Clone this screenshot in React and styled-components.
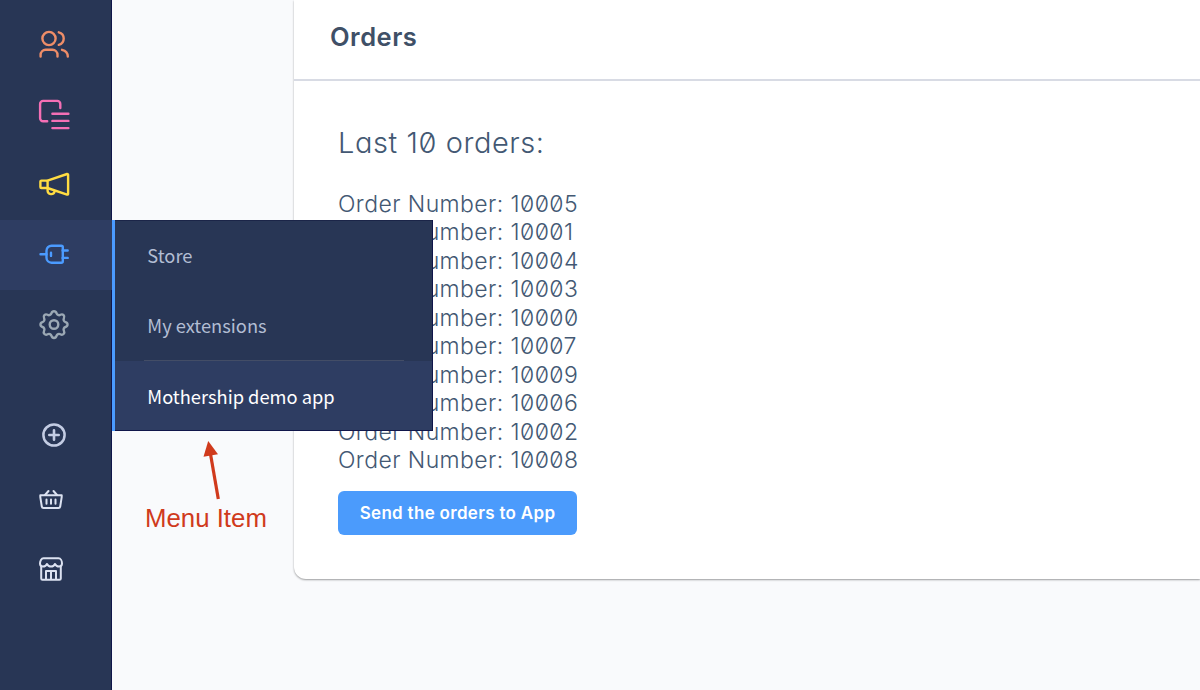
import React from "react";
import styled, { createGlobalStyle } from "styled-components";

const GlobalStyle = createGlobalStyle`
  * { box-sizing: border-box; }
  body { margin: 0; background: #f9fafc; overflow: hidden; }
`;

const Page = styled.div`
  position: relative;
  display: flex;
  height: 690px;
  overflow: hidden;
  background: #f9fafc;
  font-family: Inter, sans-serif;
  font-feature-settings: "zero", "cv11";
  color: #435873;
`;

const Sidebar = styled.nav`
  position: relative;
  z-index: 2;
  flex: 0 0 112px;
  width: 112px;
  display: flex;
  flex-direction: column;
  padding-top: 10px;
  background: #283655;
  box-shadow: inset -1px 0 0 #10164a;
`;

const NavItem = styled.a`
  position: relative;
  display: flex;
  align-items: center;
  flex: 0 0 ${(p) => p.$height || 70}px;
  margin-top: ${(p) => p.$gap || 0}px;
  padding-left: ${(p) => p.$indent || 38}px;
  color: ${(p) => p.$color};
  background: ${(p) => (p.$active ? "#2e3d62" : "transparent")};
`;

const Icon = styled.svg`
  display: block;
  width: ${(p) => p.$size || 32}px;
  height: ${(p) => p.$size || 32}px;
  fill: none;
  stroke: currentColor;
  stroke-width: ${(p) => p.$weight || 2};
  stroke-linecap: round;
  stroke-linejoin: round;
`;

const Flyout = styled.div`
  position: absolute;
  left: 112px;
  top: 0;
  width: 321px;
  height: 211px;
  display: flex;
  flex-direction: column;
  background: #283655;
  border-left: 3px solid #4b9bff;
  box-shadow: inset -1px -1px 0 #10164a, inset 0 1px 0 #1b2548;
  font-family: "Noto Sans CJK SC", sans-serif;
  font-feature-settings: normal;
`;

const FlyoutItem = styled.span`
  display: flex;
  align-items: center;
  height: 70px;
  padding: 0 0 1px 32.3px;
  font-size: 18.3px;
  color: ${(p) => (p.$active ? "#fff" : "#b2bdd3")};
  background: ${(p) => (p.$active ? "#2e3d62" : "transparent")};
  box-shadow: ${(p) => (p.$active ? "inset -1px -1px 0 #10164a" : "none")};
`;

const Divider = styled.hr`
  width: 260px;
  height: 1px;
  margin: 0 0 0 29px;
  border: 0;
  background: #434d66;
`;

const Card = styled.main`
  flex: 1;
  height: 578.5px;
  margin-left: 182px;
  background: #fff;
  border-radius: 0 0 0 12px;
  box-shadow: 0 1px 2px rgba(0, 0, 0, 0.38);
`;

const CardHeader = styled.header`
  display: flex;
  align-items: center;
  height: 81px;
  padding: 0 0 5px 36px;
  border-bottom: 2px solid #d8dbe4;
`;

const Title = styled.h1`
  margin: 0;
  font-size: 25.5px;
  line-height: 32px;
  font-weight: 600;
  letter-spacing: 0.5px;
  color: #3f5067;
`;

const CardBody = styled.section`
  padding: 42px 0 0 44px;
`;

const Heading = styled.h2`
  margin: 0;
  font-size: 29px;
  line-height: 40px;
  font-weight: 350;
  letter-spacing: 0.57px;
`;

const OrderList = styled.ul`
  margin: 27px 0 0;
  padding: 0;
  list-style: none;
`;

const Order = styled.li`
  height: 28.45px;
  line-height: 28.45px;
  font-size: 23px;
  font-weight: 350;
  letter-spacing: 0.42px;
  white-space: nowrap;
`;

const Button = styled.button`
  display: block;
  width: 239px;
  height: 43.5px;
  margin-top: 17px;
  padding: 0;
  border: 0;
  border-radius: 6px;
  background: #4b9bfc;
  color: #fff;
  font: 600 17px/44px Inter, sans-serif;
  letter-spacing: 0.3px;
`;

const Annotation = styled.div`
  position: absolute;
  left: 145px;
  top: 440px;
  color: #d03a1c;
  font: 25.8px/32px "Liberation Sans", sans-serif;
  white-space: nowrap;
`;

const Arrow = styled.svg`
  display: block;
  width: 90px;
  height: 62px;
`;

const orders = [10005, 10001, 10004, 10003, 10000, 10007, 10009, 10006, 10002, 10008];

const UsersIcon = () => (
  <Icon viewBox="0 0 32 32" $weight={2.4}>
    <circle cx="11" cy="9.5" r="6.6" />
    <path d="M2.6 27.500v-1.7a5 5 0 0 1 5-5h6.900a5 5 0 0 1 5 5v1.700" />
    <path d="M20.800 3.300a6.500 6.500 0 0 1 0 12.600M24 20.800c4 1 5.800 2.800 5.800 6.700" />
  </Icon>
);

const ContentIcon = () => (
  <Icon viewBox="0 0 32 32" $weight={2.4}>
    <path d="M9.200 22.200H5.100a3 3 0 0 1-3-3V4.900a3 3 0 0 1 3-3h14.200a3 3 0 0 1 3 3v4.200" />
    <path d="M14.400 14.700h16M14.400 21.900h16M14.400 29.100h16" />
  </Icon>
);

const MegaphoneIcon = () => (
  <Icon viewBox="0 0 32 32" $weight={2.4}>
    <path d="M9.500 11.600 29.100 5a.8.800 0 0 1 1 .8v19a.8.800 0 0 1-1 .8L9.500 19" />
    <rect x="2.400" y="11.600" width="7.200" height="7.400" rx="1" />
    <path d="M9.600 19.200v2.500a3.600 3.600 0 0 0 7 1" />
  </Icon>
);

const PlugIcon = () => (
  <Icon viewBox="0 0 32 32" $weight={2.4}>
    <path d="M2.500 15.200h6M13 13.700v3.200M24.600 11.500H29.700M24.600 18.900H29.700" />
    <path d="M13.500 6.700h9.800a1.500 1.500 0 0 1 1.500 1.500v14a1.500 1.500 0 0 1-1.500 1.500h-9.800a5 5 0 0 1-5-5v-7a5 5 0 0 1 5-5Z" />
  </Icon>
);

const GearIcon = () => (
  <Icon viewBox="0 0 32 32" $weight={2.4}>
    <circle cx="16" cy="15.500" r="4.300" />
    <path d="M13.500 4.200c.8-2.700 4.200-2.700 5 0 .5 1.700 2.300 2.500 3.900 1.600 2.500-1.300 4.800 1 3.500 3.500-.8 1.600 0 3.300 1.600 3.800 2.700.8 2.700 4.100 0 4.900-1.600.5-2.400 2.300-1.600 3.800 1.300 2.500-1 4.800-3.500 3.500-1.600-.9-3.400-.1-3.900 1.600-.8 2.700-4.200 2.700-5 0-.5-1.700-2.300-2.500-3.900-1.600-2.500 1.300-4.800-1-3.500-3.500.8-1.500 0-3.300-1.600-3.800-2.700-.8-2.700-4.100 0-4.900 1.600-.5 2.400-2.200 1.600-3.800-1.300-2.500 1-4.800 3.500-3.500 1.600.9 3.400.1 3.900-1.600Z" />
  </Icon>
);

const PlusIcon = () => (
  <Icon viewBox="0 0 24 24" $size={24}>
    <circle cx="12" cy="12" r="10.600" strokeWidth="2.500" />
    <path d="M12 7.300v9.400M7.300 12h9.400" strokeWidth="2.600" />
  </Icon>
);

const BasketIcon = () => (
  <Icon viewBox="0 0 24 24" $size={24}>
    <path d="M1.300 7.200h21.400v2L21.200 18.500a1.800 1.800 0 0 1-1.800 1.500H4.600a1.800 1.800 0 0 1-1.800-1.500L1.300 9.200Z" />
    <path d="M9.500 3 6 7M14.500 3 18 7M7.500 11.500v4.200M12 11.500v4.200M16.500 11.500v4.200" />
  </Icon>
);

const ShopIcon = () => (
  <Icon viewBox="0 0 24 24" $size={24}>
    <path d="M4.500 1.300h15C21.700 1.300 23 4 23 6.500S21.700 9.500 20 9.500c-1.800 0-3.300-1-4-2.500-.7 1.600-2.200 2.500-4 2.500S8.700 8.600 8 7C7.300 8.500 5.800 9.500 4 9.500S1 9 1 6.500 2.300 1.300 4.500 1.300Z" />
    <path d="M2.200 9.500v12a1.300 1.300 0 0 0 1.300 1.300h17a1.300 1.300 0 0 0 1.300-1.300v-12M7 22.500v-8.500h10v8.500M12 14v8.500" />
  </Icon>
);

export default function App() {
  return (
    <Page>
      <GlobalStyle />
      <Sidebar>
        <NavItem $color="#ee8d68"><UsersIcon /></NavItem>
        <NavItem $color="#f46fb5"><ContentIcon /></NavItem>
        <NavItem $color="#ffdc42"><MegaphoneIcon /></NavItem>
        <NavItem $color="#4b9bff" $active>
          <PlugIcon />
          <Flyout>
            <FlyoutItem>Store</FlyoutItem>
            <FlyoutItem>My extensions</FlyoutItem>
            <Divider />
            <FlyoutItem $active>Mothership demo app</FlyoutItem>
          </Flyout>
        </NavItem>
        <NavItem $color="#9ba8b4"><GearIcon /></NavItem>
        <NavItem $color="#c3cce3" $gap={40} $indent={42}><PlusIcon /></NavItem>
        <NavItem $color="#dce2f1" $height={60} $indent={39}><BasketIcon /></NavItem>
        <NavItem $color="#dce2f1" $height={78} $indent={39}><ShopIcon /></NavItem>
      </Sidebar>
      <Card>
        <CardHeader>
          <Title>Orders</Title>
        </CardHeader>
        <CardBody>
          <Heading>Last 10 orders:</Heading>
          <OrderList>
            {orders.map((number) => (
              <Order key={number}>Order Number: {number}</Order>
            ))}
          </OrderList>
          <Button>Send the orders to App</Button>
        </CardBody>
      </Card>
      <Annotation>
        <Arrow viewBox="0 0 90 62">
          <path d="M65.500 14 73.300 59" fill="none" stroke="#d03a1c" strokeWidth="3.200" />
          <path d="M63.200 1 73 14.200 58.500 16.700Z" fill="#d03a1c" />
        </Arrow>
        Menu Item
      </Annotation>
    </Page>
  );
}
